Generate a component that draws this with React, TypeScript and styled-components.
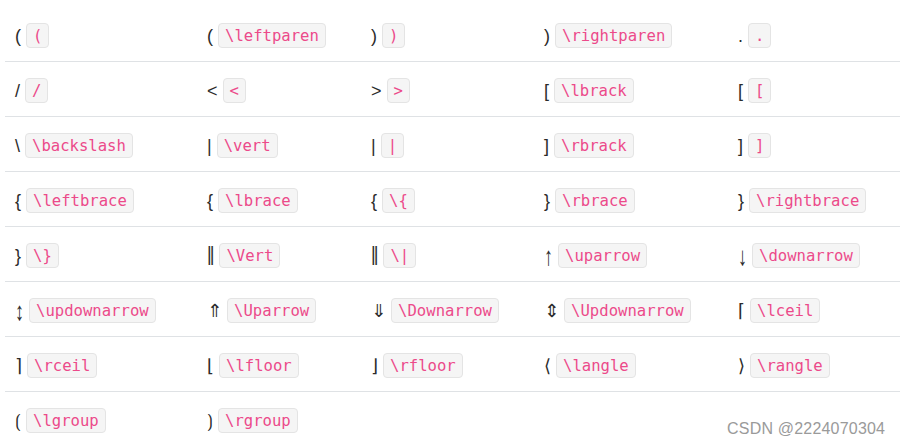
import React from "react";
import styled, { createGlobalStyle } from "styled-components";

const Global = createGlobalStyle`
  html, body { margin: 0; padding: 0; background: #ffffff; }
  body { width: 901px; height: 445px; overflow: hidden; position: relative; }
`;

const Page = styled.div`
  position: relative;
  width: 901px;
  height: 445px;
  padding: 7px 1px 0 5px;
  box-sizing: border-box;
`;

const Table = styled.div`
  display: flex;
  flex-direction: column;
`;

const Row = styled.div<{ $last?: boolean }>`
  display: grid;
  grid-template-columns: 192px 164px 173px 194px 172px;
  height: 54px;
  border-bottom: ${(p) => (p.$last ? "none" : "1px solid #dfe2e5")};
`;

const Cell = styled.div`
  display: flex;
  align-items: center;
  padding: 3px 0 0 10px;
  gap: 5px;
`;

const Sym = styled.span<{ $stretch?: boolean }>`
  display: inline-block;
  font-family: "Liberation Sans", "DejaVu Sans", sans-serif;
  font-size: 18px;
  color: #2b2b2b;
  line-height: 1;
  transform: ${(p) => (p.$stretch ? "scaleY(1.45)" : "none")};
`;

const Code = styled.code`
  display: inline-flex;
  align-items: center;
  height: 23px;
  padding: 0 6px;
  border: 1px solid #e4e4e4;
  border-radius: 4px;
  background: #f5f5f5;
  color: #ec4a8a;
  font-family: "DejaVu Sans Mono", "Liberation Mono", monospace;
  font-size: 15.6px;
`;

const Watermark = styled.div`
  position: absolute;
  left: 727px;
  top: 420px;
  font-family: "Liberation Sans", Arial, sans-serif;
  font-size: 16px;
  color: #9a9a9a;
  letter-spacing: 0.2px;
`;

const rows: [string, string][][] = [
  [["(", "("], ["(", "\\leftparen"], [")", ")"], [")", "\\rightparen"], [".", "."]],
  [["/", "/"], ["<", "<"], [">", ">"], ["[", "\\lbrack"], ["[", "["]],
  [["\\", "\\backslash"], ["|", "\\vert"], ["|", "|"], ["]", "\\rbrack"], ["]", "]"]],
  [["{", "\\leftbrace"], ["{", "\\lbrace"], ["{", "\\{"], ["}", "\\rbrace"], ["}", "\\rightbrace"]],
  [["}", "\\}"], ["‖", "\\Vert"], ["‖", "\\|"], ["↑", "\\uparrow"], ["↓", "\\downarrow"]],
  [["↕", "\\updownarrow"], ["⇑", "\\Uparrow"], ["⇓", "\\Downarrow"], ["⇕", "\\Updownarrow"], ["⌈", "\\lceil"]],
  [["⌉", "\\rceil"], ["⌊", "\\lfloor"], ["⌋", "\\rfloor"], ["⟨", "\\langle"], ["⟩", "\\rangle"]],
  [["⟮", "\\lgroup"], ["⟯", "\\rgroup"]],
];

const stretched = new Set(["↑", "↓", "↕", "‖"]);

export default function App() {
  return (
    <>
      <Global />
      <Page>
        <Table>
          {rows.map((r, i) => (
            <Row key={i} $last={i === rows.length - 1}>
              {r.map(([s, c], j) => (
                <Cell key={j}>
                  <Sym $stretch={stretched.has(s)}>{s}</Sym>
                  <Code>{c}</Code>
                </Cell>
              ))}
            </Row>
          ))}
        </Table>
        <Watermark>CSDN @2224070304</Watermark>
      </Page>
    </>
  );
}
